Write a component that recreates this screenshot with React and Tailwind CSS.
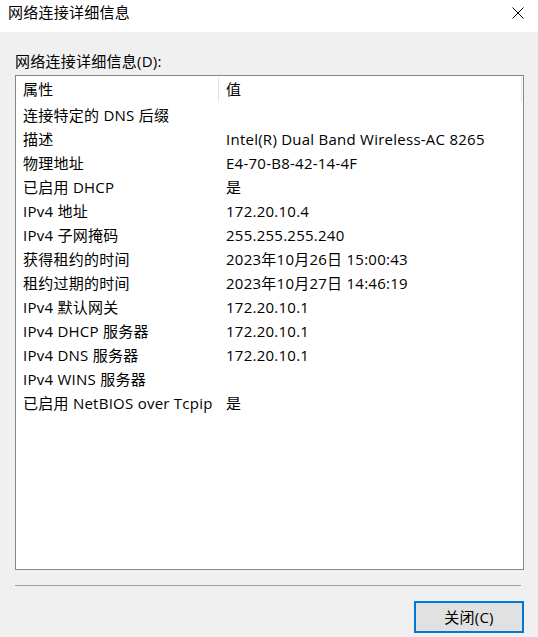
import React from 'react';

const rows = [
  ['连接特定的 DNS 后缀', ''],
  ['描述', 'Intel(R) Dual Band Wireless-AC 8265'],
  ['物理地址', 'E4-70-B8-42-14-4F'],
  ['已启用 DHCP', '是'],
  ['IPv4 地址', '172.20.10.4'],
  ['IPv4 子网掩码', '255.255.255.240'],
  ['获得租约的时间', '2023年10月26日 15:00:43'],
  ['租约过期的时间', '2023年10月27日 14:46:19'],
  ['IPv4 默认网关', '172.20.10.1'],
  ['IPv4 DHCP 服务器', '172.20.10.1'],
  ['IPv4 DNS 服务器', '172.20.10.1'],
  ['IPv4 WINS 服务器', ''],
  ['已启用 NetBIOS over Tcpip', '是'],
];

const font = { fontFamily: '"Open Sans", "Noto Sans CJK SC", sans-serif' };

export default function App() {
  return (
    <div
      className="w-[538px] h-[637px] bg-[#f0f0f0] flex flex-col text-[15px] tracking-[0.25px] text-black overflow-hidden"
      style={font}
    >
      {/* Title bar */}
      <div className="h-[32px] bg-white flex items-start justify-between pl-[8px] pr-[14px]">
        <span className="mt-[2px] leading-[20px]">网络连接详细信息</span>
        <svg className="mt-[7px]" width="12" height="12" viewBox="0 0 12 12">
          <path d="M0.5 0.5 L11.5 11.5 M11.5 0.5 L0.5 11.5" stroke="#000" strokeWidth="1" fill="none" />
        </svg>
      </div>

      {/* Body */}
      <div className="px-[15px] flex flex-col">
        <div className="mt-[19px] h-[20px] leading-[20px] mb-[4px]">网络连接详细信息(D):</div>

        <div className="h-[495px] w-[509px] border border-[#828790] bg-white flex flex-col">
          {/* Header */}
          <div className="h-[27px] flex items-stretch">
            <div className="w-[203px] pl-[7px] flex items-center relative">
              <span>属性</span>
              <div className="absolute right-0 top-[1px] bottom-[1px] w-px bg-[#e5e5e5]" />
            </div>
            <div className="w-[303px] pl-[7px] flex items-center relative">
              <span>值</span>
              <div className="absolute right-0 top-[1px] bottom-[1px] w-px bg-[#e5e5e5]" />
            </div>
          </div>

          {/* Rows */}
          {rows.map(([k, v], i) => (
            <div key={i} className="h-[24px] flex items-center whitespace-nowrap">
              <div className="w-[203px] pl-[7px]">{k}</div>
              <div className="pl-[7px]">{v}</div>
            </div>
          ))}
        </div>

        <div className="mt-[15px] h-px w-[506px] bg-[#a0a0a0]" />

        <button className="mt-[15px] ml-[399px] w-[110px] h-[32px] bg-[#e1e1e1] border-2 border-[#0078d7] flex items-center justify-center leading-none">
          关闭(C)
        </button>
      </div>
    </div>
  );
}
